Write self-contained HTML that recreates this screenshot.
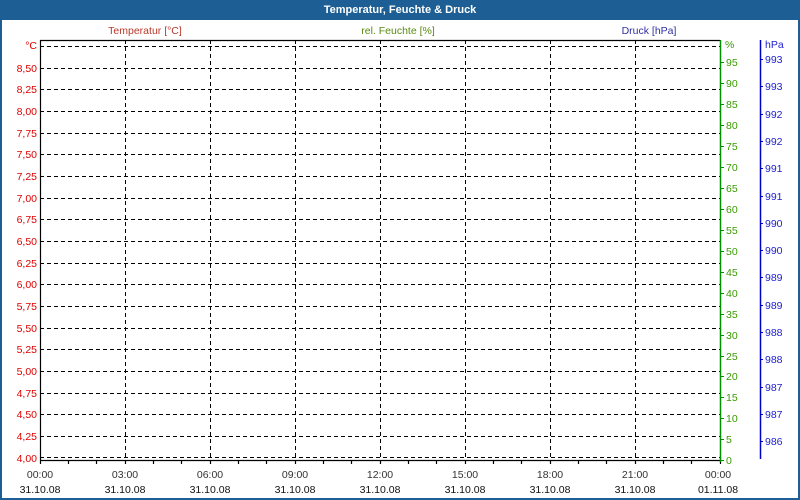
<!DOCTYPE html>
<html><head><meta charset="utf-8"><style>
html,body{margin:0;padding:0;width:800px;height:500px;overflow:hidden;background:#1d5f94}
svg{display:block;font-family:"Liberation Sans",sans-serif;font-size:10.5px}
</style></head><body>
<svg width="800" height="500" xmlns="http://www.w3.org/2000/svg">
<rect x="0" y="0" width="800" height="500" fill="#1d5f94"/>
<rect x="2" y="20" width="796" height="478" fill="#fff"/>
<text x="400" y="13" fill="#fff" font-weight="bold" font-size="11" text-anchor="middle">Temperatur, Feuchte &amp; Druck</text>
<text x="145" y="34" fill="#b83a2a" text-anchor="middle">Temperatur [°C]</text>
<text x="398" y="34" fill="#5a8a10" text-anchor="middle">rel. Feuchte [%]</text>
<text x="649" y="34" fill="#3030a0" text-anchor="middle">Druck [hPa]</text>
<g stroke="#000" stroke-width="1" stroke-dasharray="4,3" fill="none">
<path d="M40 46.5H720M40 68.5H720M40 89.5H720M40 111.5H720M40 133.5H720M40 154.5H720M40 176.5H720M40 198.5H720M40 219.5H720M40 241.5H720M40 263.5H720M40 284.5H720M40 306.5H720M40 328.5H720M40 349.5H720M40 371.5H720M40 393.5H720M40 414.5H720M40 436.5H720M40 457.5H720"/>
<path d="M125.5 40V460M210.5 40V460M295.5 40V460M380.5 40V460M465.5 40V460M550.5 40V460M635.5 40V460"/>
</g>
<g stroke="#000" stroke-width="1.2" fill="none">
<path d="M40 40.5H720M40 460.5H720M40.5 40V464"/>
<path d="M68.5 460V464M96.5 460V464M125.5 460V464M153.5 460V464M181.5 460V464M210.5 460V464M238.5 460V464M266.5 460V464M295.5 460V464M323.5 460V464M351.5 460V464M380.5 460V464M408.5 460V464M436.5 460V464M465.5 460V464M493.5 460V464M521.5 460V464M550.5 460V464M578.5 460V464M606.5 460V464M635.5 460V464M663.5 460V464M691.5 460V464M720.5 460V464"/>
</g>
<g stroke="#009000" stroke-width="1.5"><path d="M720.5 40V462"/>
<path d="M720 62.5h4M720 83.5h4M720 104.5h4M720 125.5h4M720 146.5h4M720 167.5h4M720 188.5h4M720 209.5h4M720 230.5h4M720 251.5h4M720 272.5h4M720 293.5h4M720 314.5h4M720 335.5h4M720 356.5h4M720 376.5h4M720 397.5h4M720 418.5h4M720 439.5h4M720 460.5h4" stroke-width="1"/></g>
<g stroke="#0000c8"><path d="M760.5 40V459" stroke-width="1.5"/>
<path d="M760 59.5h3M760 86.5h3M760 114.5h3M760 141.5h3M760 168.5h3M760 196.5h3M760 223.5h3M760 250.5h3M760 277.5h3M760 305.5h3M760 332.5h3M760 359.5h3M760 387.5h3M760 414.5h3M760 441.5h3"/></g>
<g fill="#e00000" text-anchor="end">
<text x="37" y="49">°C</text>
<text x="37" y="72">8,50</text><text x="37" y="93">8,25</text><text x="37" y="115">8,00</text><text x="37" y="137">7,75</text><text x="37" y="158">7,50</text><text x="37" y="180">7,25</text><text x="37" y="202">7,00</text><text x="37" y="223">6,75</text><text x="37" y="245">6,50</text><text x="37" y="267">6,25</text><text x="37" y="288">6,00</text><text x="37" y="310">5,75</text><text x="37" y="332">5,50</text><text x="37" y="353">5,25</text><text x="37" y="375">5,00</text><text x="37" y="397">4,75</text><text x="37" y="418">4,50</text><text x="37" y="440">4,25</text><text x="37" y="462">4,00</text>
</g>
<g fill="#3a9a00">
<text x="725" y="48">%</text>
<text x="726" y="66">95</text><text x="726" y="87">90</text><text x="726" y="108">85</text><text x="726" y="129">80</text><text x="726" y="150">75</text><text x="726" y="171">70</text><text x="726" y="192">65</text><text x="726" y="213">60</text><text x="726" y="234">55</text><text x="726" y="255">50</text><text x="726" y="276">45</text><text x="726" y="297">40</text><text x="726" y="318">35</text><text x="726" y="339">30</text><text x="726" y="360">25</text><text x="726" y="380">20</text><text x="726" y="401">15</text><text x="726" y="422">10</text><text x="726" y="443">5</text><text x="726" y="464">0</text>
</g>
<g fill="#2020d0">
<text x="765" y="48">hPa</text>
<text x="765" y="63">993</text><text x="765" y="90">993</text><text x="765" y="118">992</text><text x="765" y="145">992</text><text x="765" y="172">991</text><text x="765" y="200">991</text><text x="765" y="227">990</text><text x="765" y="254">990</text><text x="765" y="281">989</text><text x="765" y="309">989</text><text x="765" y="336">988</text><text x="765" y="363">988</text><text x="765" y="391">987</text><text x="765" y="418">987</text><text x="765" y="445">986</text>
</g>
<g fill="#333" text-anchor="middle">
<text x="40" y="478">00:00</text><text x="125" y="478">03:00</text><text x="210" y="478">06:00</text><text x="295" y="478">09:00</text><text x="380" y="478">12:00</text><text x="465" y="478">15:00</text><text x="550" y="478">18:00</text><text x="635" y="478">21:00</text><text x="718" y="478">00:00</text>
</g>
<g fill="#111" text-anchor="middle">
<text x="40" y="493">31.10.08</text><text x="125" y="493">31.10.08</text><text x="210" y="493">31.10.08</text><text x="295" y="493">31.10.08</text><text x="380" y="493">31.10.08</text><text x="465" y="493">31.10.08</text><text x="550" y="493">31.10.08</text><text x="635" y="493">31.10.08</text><text x="718" y="493">01.11.08</text>
</g>
</svg>
</body></html>
